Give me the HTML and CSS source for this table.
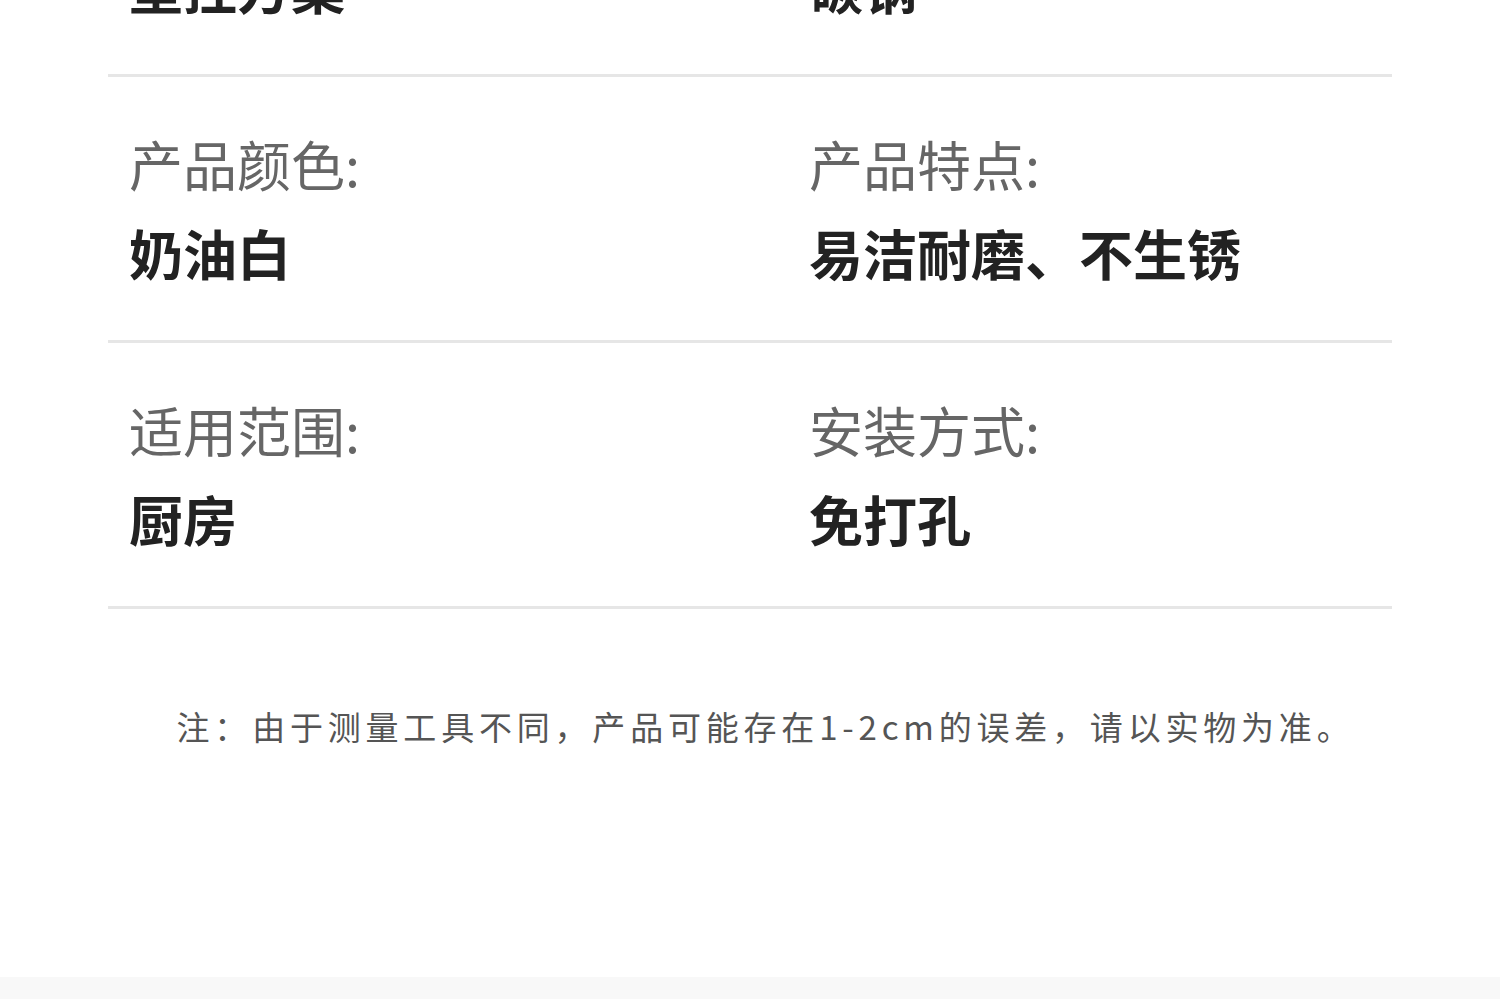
FILE: index.html
```html
<!DOCTYPE html>
<html lang="zh-CN">
<head>
    <meta charset="UTF-8">
    <meta name="viewport" content="width=device-width, initial-scale=1.0">
    <title>产品参数</title>
    <link rel="stylesheet" href="styles.css">
</head>
<body>
    <!-- 参数表 -->
    <section class="specs">
        <div class="spec-row first">
            <div class="spec-item">
                <div class="spec-label">安装方案:</div>
                <div class="spec-value">壁挂方案</div>
            </div>
            <div class="spec-item">
                <div class="spec-label">产品材质:</div>
                <div class="spec-value">碳钢</div>
            </div>
        </div>
        <div class="spec-row">
            <div class="spec-item">
                <div class="spec-label">产品颜色:</div>
                <div class="spec-value">奶油白</div>
            </div>
            <div class="spec-item">
                <div class="spec-label">产品特点:</div>
                <div class="spec-value">易洁耐磨、不生锈</div>
            </div>
        </div>
        <div class="spec-row">
            <div class="spec-item">
                <div class="spec-label">适用范围:</div>
                <div class="spec-value">厨房</div>
            </div>
            <div class="spec-item">
                <div class="spec-label">安装方式:</div>
                <div class="spec-value">免打孔</div>
            </div>
        </div>
    </section>

    <!-- 备注 -->
    <p class="note">注：由于测量工具不同，产品可能存在1-2cm的误差，请以实物为准。</p>

    <div class="bottom-bar"></div>
</body>
</html>
```

FILE: styles.css
```css
/* Reset básico */
* {
    margin: 0;
    padding: 0;
    box-sizing: border-box;
}

body {
    font-family: "Noto Sans CJK SC", "Noto Sans", sans-serif;
    background-color: #ffffff;
    color: #222222;
    overflow: hidden;
}

/* Tabla de parámetros */
.specs {
    width: 1284px;
    margin: 0 auto;
}

.spec-row {
    display: grid;
    grid-template-columns: 680px 1fr;
    padding: 60px 0 60px 21px;
    border-bottom: 3px solid #e6e6e6;
}

.spec-row.first {
    margin-top: -189px;
}

.spec-item {
    display: flex;
    flex-direction: column;
    gap: 35px;
}

.spec-label {
    font-size: 54px;
    line-height: 54px;
    color: #666666;
}

.spec-value {
    font-size: 54px;
    line-height: 54px;
    font-weight: 700;
    color: #222222;
}

/* Nota */
.note {
    margin-top: 100px;
    padding-left: 31px;
    text-align: center;
    font-size: 33px;
    line-height: 34px;
    letter-spacing: 4.8px;
    color: #555555;
}

.bottom-bar {
    margin-top: 234px;
    height: 40px;
    background-color: #f8f8f8;
}
```
